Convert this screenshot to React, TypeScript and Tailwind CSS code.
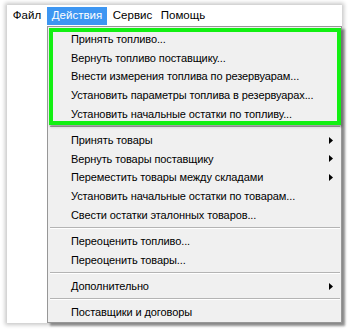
import React from "react";

type Item = { label: string; arrow?: boolean } | { sep: true };

const items: Item[] = [
  { label: "Принять топливо..." },
  { label: "Вернуть топливо поставщику..." },
  { label: "Внести измерения топлива по резервуарам..." },
  { label: "Установить параметры топлива в резервуарах..." },
  { label: "Установить начальные остатки по топливу..." },
  { sep: true },
  { label: "Принять товары", arrow: true },
  { label: "Вернуть товары поставщику", arrow: true },
  { label: "Переместить товары между складами", arrow: true },
  { label: "Установить начальные остатки по товарам..." },
  { label: "Свести остатки эталонных товаров..." },
  { sep: true },
  { label: "Переоценить топливо..." },
  { label: "Переоценить товары..." },
  { sep: true },
  { label: "Дополнительно", arrow: true },
  { sep: true },
  { label: "Поставщики и договоры" },
];

function Arrow() {
  return (
    <svg width="4" height="7" viewBox="0 0 4 7" className="mr-[8px]">
      <path d="M0 0 L4 3.5 L0 7 Z" fill="#000" />
    </svg>
  );
}

export default function App() {
  return (
    <div
      className="w-[350px] h-[332px] bg-white overflow-hidden pt-[5px] pl-[7px]"
      style={{ fontFamily: '"Liberation Sans", Arial, sans-serif' }}
    >
      <div className="relative w-[335px] h-[318px] bg-white shadow-[0_0_4px_2px_rgba(0,0,0,0.22)]">
        {/* menu bar */}
        <div className="flex items-center h-[21px] text-[11.5px] text-black">
          <div className="w-[40px] h-[18px] flex items-center justify-center">Файл</div>
          <div className="w-[60px] h-[18px] flex items-center justify-center bg-[#3d96f2] text-white">Действия</div>
          <div className="w-[51px] h-[18px] flex items-center justify-center">Сервис</div>
          <div className="w-[50px] h-[18px] flex items-center justify-center">Помощь</div>
        </div>

        {/* dropdown */}
        <div className="absolute left-[40px] top-[21px] w-[295px] h-[297px] bg-[#f0f0f0] border border-[#979797] shadow-[3px_3px_2px_rgba(0,0,0,0.35)] pt-[3px] text-[11px] tracking-[-0.1px] text-black">
          {items.map((it, i) =>
            "sep" in it ? (
              <div key={i} className="h-[7.5px] flex flex-col justify-center pl-[2px] pr-[1px]">
                <div className="border-t border-[#b4b4b4] border-b border-b-white" />
              </div>
            ) : (
              <div key={i} className="h-[18.7px] flex items-center justify-between pl-[23px]">
                <span>{it.label}</span>
                {it.arrow && <Arrow />}
              </div>
            )
          )}

          {/* green highlight frame */}
          <div className="absolute left-[1px] top-[1px] w-[292px] h-[97px] border-[4px] border-[#12f012] shadow-[1px_2px_2px_rgba(0,0,0,0.35)]" />
        </div>
      </div>
    </div>
  );
}
